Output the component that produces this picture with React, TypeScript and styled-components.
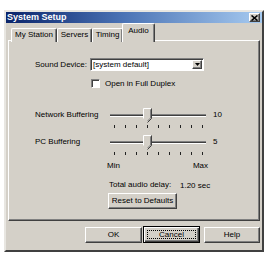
import React from "react";
import styled, { createGlobalStyle, css } from "styled-components";

const GlobalStyle = createGlobalStyle`
  html, body {
    margin: 0;
    padding: 0;
    background: #ffffff;
  }
  body {
    font-family: "Liberation Sans", Arial, sans-serif;
    font-size: 8px;
    color: #000;
  }
`;

const FACE = "#d4d0c8";

const raised = css`
  border: 1px solid;
  border-color: #ffffff #404040 #404040 #ffffff;
  box-shadow: inset -1px -1px 0 #808080;
`;

const sunken = css`
  border: 1px solid;
  border-color: #808080 #ffffff #ffffff #808080;
  box-shadow: inset 1px 1px 0 #404040;
`;

const Window = styled.div`
  box-sizing: border-box;
  margin: 10px 0 0 4px;
  width: 260px;
  height: 242px;
  background: ${FACE};
  border: 2px solid;
  border-color: #e8e6e1 #404040 #404040 #e8e6e1;
  display: flex;
  flex-direction: column;
`;

const TitleBar = styled.div`
  height: 11px;
  background: linear-gradient(90deg, #0a246a 0%, #4a72b4 45%, #a6caf0 100%);
  display: flex;
  align-items: center;
  justify-content: space-between;
  padding: 0 2px 0 1px;
`;

const Title = styled.span`
  color: #fff;
  font-weight: bold;
  font-size: 9px;
  line-height: 11px;
`;

const CloseButton = styled.div`
  box-sizing: border-box;
  width: 11px;
  height: 9px;
  background: ${FACE};
  ${raised};
  display: flex;
  align-items: center;
  justify-content: center;
`;

const Body = styled.div`
  display: flex;
  flex-direction: column;
  padding: 2px 2px 0 2px;
`;

const TabRow = styled.div`
  display: flex;
  align-items: flex-end;
  height: 17px;
  padding-left: 3px;
  position: relative;
  z-index: 1;
  margin-bottom: -2px;
`;

const Tab = styled.div<{ $active?: boolean; $w: number }>`
  box-sizing: border-box;
  width: ${(p) => p.$w}px;
  height: ${(p) => (p.$active ? 19 : 14)}px;
  background: ${FACE};
  border: 1px solid;
  border-bottom: none;
  border-color: #ffffff #404040 #404040 #ffffff;
  box-shadow: inset -1px 0 0 #808080;
  border-radius: 2px 2px 0 0;
  display: flex;
  justify-content: center;
  padding-top: ${(p) => (p.$active ? 2 : 1)}px;
  line-height: 10px;
  ${(p) => p.$active && css`margin-left: -1px;`}
`;

const Panel = styled.div`
  box-sizing: border-box;
  height: 181px;
  background: ${FACE};
  border: 1px solid;
  border-color: #ffffff #404040 #404040 #ffffff;
  box-shadow: inset -1px -1px 0 #808080;
  display: flex;
  flex-direction: column;
  padding-top: 17px;
`;

const Row = styled.div<{ $indent: number; $top?: number }>`
  display: flex;
  align-items: center;
  padding-left: ${(p) => p.$indent}px;
  margin-top: ${(p) => p.$top ?? 0}px;
`;

const Label = styled.span<{ $w: number }>`
  width: ${(p) => p.$w}px;
  flex-shrink: 0;
  line-height: 10px;
`;

const SliderLabel = styled(Label)`
  align-self: flex-start;
  line-height: 16px;
`;

const Select = styled.div`
  box-sizing: border-box;
  width: 114px;
  height: 13px;
  background: #fff;
  ${sunken};
  display: flex;
  align-items: center;
  justify-content: space-between;
  padding: 0 1px 0 2px;
`;

const SelectArrow = styled.div`
  box-sizing: border-box;
  width: 10px;
  height: 9px;
  background: ${FACE};
  ${raised};
  display: flex;
  align-items: center;
  justify-content: center;
`;

const CheckBox = styled.div`
  box-sizing: border-box;
  width: 9px;
  height: 9px;
  background: #fff;
  ${sunken};
  margin-right: 5px;
`;

const SliderBlock = styled.div`
  width: 96px;
  display: flex;
  flex-direction: column;
`;

const TrackArea = styled.div`
  position: relative;
  height: 16px;
  display: flex;
  align-items: center;
`;

const Track = styled.div`
  box-sizing: border-box;
  width: 100%;
  height: 3px;
  border-top: 1px solid #808080;
  border-bottom: 1px solid #ffffff;
  background: #404040;
`;

const Thumb = styled.svg`
  position: absolute;
  top: 1px;
`;

const Ticks = styled.div`
  display: flex;
  justify-content: space-between;
  padding: 2px 3px 0 4px;
  height: 6px;
  box-sizing: border-box;
`;

const Tick = styled.span`
  width: 1px;
  height: 3px;
  background: #222;
`;

const Value = styled.span`
  margin-left: 7px;
  align-self: flex-start;
  line-height: 16px;
`;

const MinMax = styled.div`
  width: 101px;
  display: flex;
  justify-content: space-between;
  margin: 5px 0 0 98px;
  line-height: 10px;
`;

const Button = styled.div<{ $w: number; $default?: boolean; $gap?: number }>`
  box-sizing: border-box;
  width: ${(p) => p.$w}px;
  height: ${(p) => (p.$default ? 17 : 16)}px;
  margin-left: ${(p) => p.$gap ?? 0}px;
  background: ${FACE};
  border: 1px solid;
  border-color: ${(p) => (p.$default ? "#000" : "#ffffff #404040 #404040 #ffffff")};
  box-shadow: ${(p) =>
    p.$default
      ? "inset 1px 1px 0 #ffffff, inset -1px -1px 0 #404040, inset -2px -2px 0 #808080"
      : "inset -1px -1px 0 #808080"};
  display: flex;
  align-items: center;
  justify-content: center;
  position: relative;
  line-height: 10px;
`;

const FocusRing = styled.span`
  position: absolute;
  inset: 3px;
  border: 1px dotted #000;
`;

const ButtonRow = styled.div`
  display: flex;
  justify-content: flex-end;
  align-items: center;
  gap: 1px;
  margin-top: 5px;
`;

const TICKS = 9;

const Slider: React.FC<{ position: number }> = ({ position }) => {
  const left = 4 + position * (88 / (TICKS - 1)) - 4;
  return (
    <SliderBlock>
      <TrackArea>
        <Track />
        <Thumb width="9" height="15" viewBox="0 0 9 15" style={{ left }}>
          <path d="M0.5 0.5H8.5V10.5L4.5 14.5L0.5 10.5Z" fill={FACE} />
          <path d="M0.5 10.5V0.5H8" stroke="#fff" fill="none" />
          <path d="M8.5 0.5V10.5L4.5 14.5" stroke="#404040" fill="none" />
          <path d="M7.5 1.5V10L4.5 13" stroke="#808080" fill="none" />
        </Thumb>
      </TrackArea>
      <Ticks>
        {Array.from({ length: TICKS }).map((_, i) => (
          <Tick key={i} />
        ))}
      </Ticks>
    </SliderBlock>
  );
};

export default function App() {
  return (
    <>
      <GlobalStyle />
      <Window>
        <TitleBar>
          <Title>System Setup</Title>
          <CloseButton>
            <svg width="7" height="6" viewBox="0 0 7 6">
              <path d="M0.5 0.5L6.5 5.5M6.5 0.5L0.5 5.5" stroke="#000" strokeWidth="1.6" />
            </svg>
          </CloseButton>
        </TitleBar>
        <Body>
          <TabRow>
            <Tab $w={46}>My Station</Tab>
            <Tab $w={35}>Servers</Tab>
            <Tab $w={31}>Timing</Tab>
            <Tab $w={33} $active>
              Audio
            </Tab>
          </TabRow>
          <Panel>
            <Row $indent={26}>
              <Label $w={55}>Sound Device:</Label>
              <Select>
                <span>[system default]</span>
                <SelectArrow>
                  <svg width="5" height="3" viewBox="0 0 5 3">
                    <path d="M0 0H5L2.5 3Z" fill="#000" />
                  </svg>
                </SelectArrow>
              </Select>
            </Row>
            <Row $indent={82} $top={8}>
              <CheckBox />
              <span>Open in Full Duplex</span>
            </Row>
            <Row $indent={26} $top={19}>
              <SliderLabel $w={75}>Network Buffering</SliderLabel>
              <Slider position={3} />
              <Value>10</Value>
            </Row>
            <Row $indent={26} $top={5}>
              <SliderLabel $w={75}>PC Buffering</SliderLabel>
              <Slider position={3} />
              <Value>5</Value>
            </Row>
            <MinMax>
              <span>Min</span>
              <span>Max</span>
            </MinMax>
            <Row $indent={100} $top={9}>
              <Label $w={71}>Total audio delay:</Label>
              <span>1.20 sec</span>
            </Row>
            <Row $indent={99} $top={3}>
              <Button $w={69}>Reset to Defaults</Button>
            </Row>
          </Panel>
          <ButtonRow>
            <Button $w={57}>OK</Button>
            <Button $w={57} $default>
              <FocusRing />
              Cancel
            </Button>
            <Button $w={56} $gap={3}>
              Help
            </Button>
          </ButtonRow>
        </Body>
      </Window>
    </>
  );
}
